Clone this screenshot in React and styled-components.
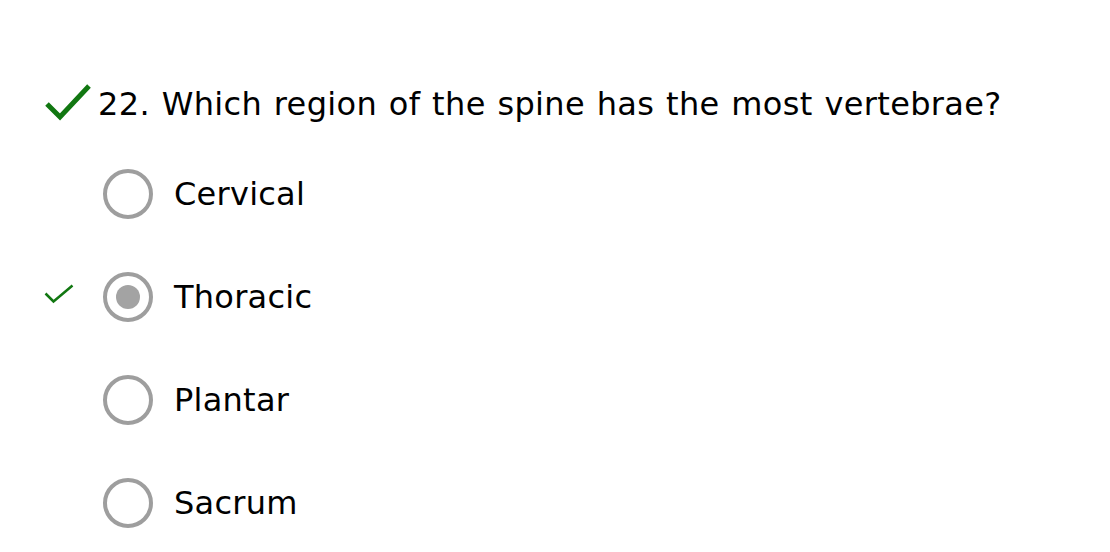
import React from "react";
import styled, { createGlobalStyle } from "styled-components";

const Global = createGlobalStyle`
  html, body { margin: 0; padding: 0; background: #fff; }
  body { font-family: "DejaVu Sans", Verdana, sans-serif; color: #000; }
`;

const Page = styled.div`
  padding: 74px 0 0 44px;
  display: flex;
  flex-direction: column;
`;

const Question = styled.div`
  display: flex;
  align-items: center;
  height: 60px;
  font-size: 32px;
  letter-spacing: 0.35px;
  word-spacing: 1.2px;
`;

const BigCheck = styled.svg`
  width: 46px;
  height: 36px;
  margin-right: 8px;
  align-self: flex-start;
  margin-top: 11px;
  overflow: visible;
`;

const Options = styled.div`
  display: flex;
  flex-direction: column;
  margin-top: 8px;
`;

const Row = styled.label`
  display: flex;
  align-items: center;
  height: 103px;
  font-size: 32px;
  letter-spacing: 0.25px;
`;

const Mark = styled.div`
  width: 59px;
  display: flex;
  align-items: center;
`;

const Radio = styled.span`
  box-sizing: border-box;
  width: 50px;
  height: 50px;
  border-radius: 50%;
  border: 4px solid #9e9e9e;
  display: flex;
  align-items: center;
  justify-content: center;
  margin-right: 21px;
  &::after {
    content: "";
    width: 24px;
    height: 24px;
    border-radius: 50%;
    background: ${(p) => (p.$checked ? "#a3a3a3" : "transparent")};
  }
`;

const SmallCheck = styled.svg`
  width: 32px;
  height: 24px;
  overflow: visible;
`;

const options = [
  { label: "Cervical" },
  { label: "Thoracic", checked: true },
  { label: "Plantar" },
  { label: "Sacrum" },
];

export default function App() {
  return (
    <>
      <Global />
      <Page>
        <Question>
          <BigCheck viewBox="0 0 46 36">
            <path d="M3 19 L16 32 L45 1" fill="none" stroke="#117711" strokeWidth="5" />
          </BigCheck>
          22. Which region of the spine has the most vertebrae?
        </Question>
        <Options>
          {options.map((o) => (
            <Row key={o.label}>
              <Mark>
                {o.checked && (
                  <SmallCheck viewBox="0 0 32 24">
                    <path d="M1.5 8.5 L9.5 16.5 L28.5 0.5" fill="none" stroke="#117711" strokeWidth="2.5" />
                  </SmallCheck>
                )}
              </Mark>
              <Radio $checked={o.checked} />
              {o.label}
            </Row>
          ))}
        </Options>
      </Page>
    </>
  );
}
